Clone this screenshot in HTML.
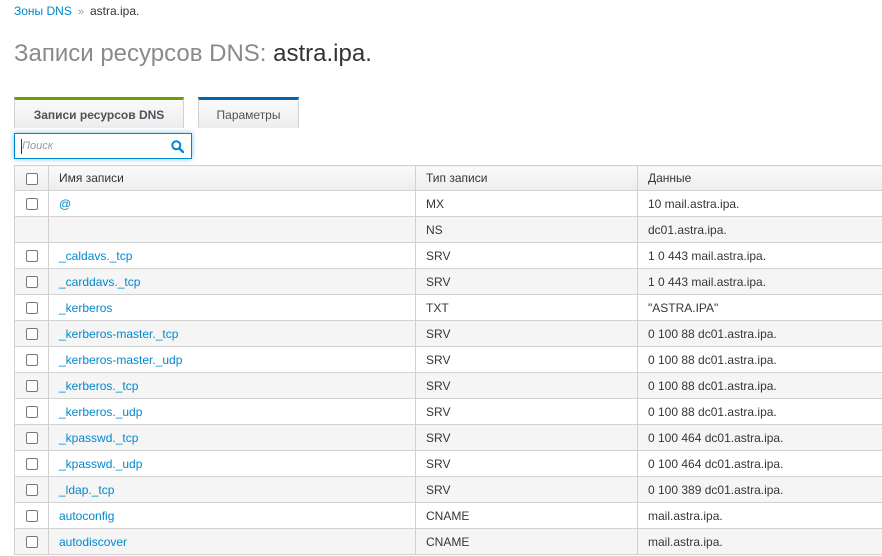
<!DOCTYPE html>
<html><head><meta charset="utf-8"><style>
*{box-sizing:border-box;margin:0;padding:0}
body{width:882px;height:556px;overflow:hidden;background:#fff;font-family:"Liberation Sans","DejaVu Sans",sans-serif;font-size:12px;color:#363636;position:relative}
a{color:#0088ce;text-decoration:none}
.bc{position:absolute;left:14px;top:4px;font-size:12px}
.bc .sep{color:#999;margin:0 6px;font-size:11px}
h1{position:absolute;left:14px;top:40px;font-size:24px;font-weight:normal;color:#8a8a8a;letter-spacing:0}
h1 span{color:#333}
.tab{position:absolute;top:97px;height:31px;border:1px solid #d1d1d1;border-bottom:none;background:linear-gradient(#fafafa,#ededed);text-align:center;line-height:32px;font-size:12px}
.t1{left:14px;width:170px;border-top:3px solid #6ca100;font-weight:bold;color:#4d5258;line-height:30px}
.t2{left:198px;width:101px;border-top:3px solid #0066b3;color:#4d5258;line-height:30px}
.search{position:absolute;left:14px;top:133px;width:178px;height:26px;border:1px solid #0088ce;box-shadow:0 0 5px rgba(0,136,206,.5);background:#fff}
.search i{position:absolute;left:7px;top:6px;font-size:11px;color:#999}
.search b{position:absolute;left:6px;top:5px;width:1px;height:15px;background:#333}
.search svg{position:absolute;right:7px;top:6px}
table{position:absolute;left:14px;top:165px;border-collapse:collapse;width:880px}
td,th{border:1px solid #d1d1d1;height:26px;padding:0 10px;text-align:left;font-weight:normal;white-space:nowrap}
th{background:linear-gradient(#fafafa,#ededed);font-weight:normal;color:#363636;height:25px}
tr:nth-child(odd) td{background:#f5f5f5}
td:first-child,th:first-child{width:34px;padding:0;text-align:center}
.cb{display:inline-block;width:12px;height:12px;border:1px solid #777;border-radius:2px;background:#fff;vertical-align:middle}
.c2{width:367px}.c3{width:222px}
</style></head><body>
<div class="bc"><a>Зоны DNS</a><span class="sep">»</span>astra.ipa.</div>
<h1>Записи ресурсов DNS: <span>astra.ipa.</span></h1>
<div class="tab t1">Записи ресурсов DNS</div>
<div class="tab t2">Параметры</div>
<div class="search"><b></b><i>Поиск</i><svg width="13" height="13" viewBox="0 0 13 13"><circle cx="5.3" cy="5.3" r="4" fill="none" stroke="#0088ce" stroke-width="2"/><path d="M8.3 8.3L12 12" stroke="#0088ce" stroke-width="2.4" stroke-linecap="round"/></svg></div>
<table>
<tr><th><span class="cb"></span></th><th class="c2">Имя записи</th><th class="c3">Тип записи</th><th>Данные</th></tr>
<tr><td><span class="cb"></span></td><td><a>@</a></td><td>MX</td><td>10 mail.astra.ipa.</td></tr>
<tr><td></td><td></td><td>NS</td><td>dc01.astra.ipa.</td></tr>
<tr><td><span class="cb"></span></td><td><a>_caldavs._tcp</a></td><td>SRV</td><td>1 0 443 mail.astra.ipa.</td></tr>
<tr><td><span class="cb"></span></td><td><a>_carddavs._tcp</a></td><td>SRV</td><td>1 0 443 mail.astra.ipa.</td></tr>
<tr><td><span class="cb"></span></td><td><a>_kerberos</a></td><td>TXT</td><td>"ASTRA.IPA"</td></tr>
<tr><td><span class="cb"></span></td><td><a>_kerberos-master._tcp</a></td><td>SRV</td><td>0 100 88 dc01.astra.ipa.</td></tr>
<tr><td><span class="cb"></span></td><td><a>_kerberos-master._udp</a></td><td>SRV</td><td>0 100 88 dc01.astra.ipa.</td></tr>
<tr><td><span class="cb"></span></td><td><a>_kerberos._tcp</a></td><td>SRV</td><td>0 100 88 dc01.astra.ipa.</td></tr>
<tr><td><span class="cb"></span></td><td><a>_kerberos._udp</a></td><td>SRV</td><td>0 100 88 dc01.astra.ipa.</td></tr>
<tr><td><span class="cb"></span></td><td><a>_kpasswd._tcp</a></td><td>SRV</td><td>0 100 464 dc01.astra.ipa.</td></tr>
<tr><td><span class="cb"></span></td><td><a>_kpasswd._udp</a></td><td>SRV</td><td>0 100 464 dc01.astra.ipa.</td></tr>
<tr><td><span class="cb"></span></td><td><a>_ldap._tcp</a></td><td>SRV</td><td>0 100 389 dc01.astra.ipa.</td></tr>
<tr><td><span class="cb"></span></td><td><a>autoconfig</a></td><td>CNAME</td><td>mail.astra.ipa.</td></tr>
<tr><td><span class="cb"></span></td><td><a>autodiscover</a></td><td>CNAME</td><td>mail.astra.ipa.</td></tr>
</table>
</body></html>
